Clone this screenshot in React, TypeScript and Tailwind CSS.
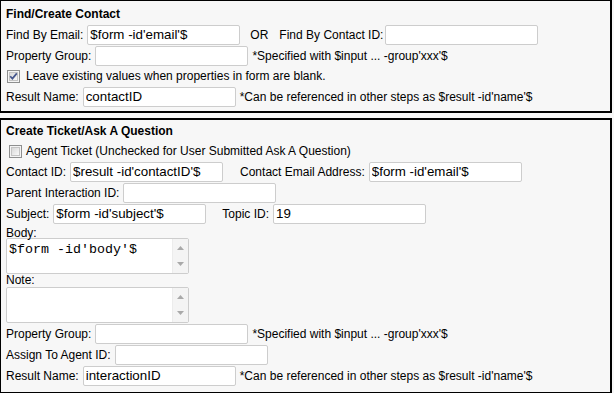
import React from 'react';

const font = { fontFamily: '"Liberation Sans", Arial, sans-serif' };

function Field({ value = '', className = '' }: { value?: string; className?: string }) {
  return (
    <input
      readOnly
      value={value}
      className={`h-[20px] w-[153px] shrink-0 rounded-[2px] border border-[#cdcdcd] bg-white px-[2px] text-[13.33px] text-black outline-none ${className}`}
    />
  );
}

function Check({ checked = false, className = '' }: { checked?: boolean; className?: string }) {
  const id = checked ? 'cb-on' : 'cb-off';
  return (
    <svg width="13" height="13" viewBox="0 0 13 13" className={`shrink-0 ${className}`}>
      <defs>
        <linearGradient id={id} x1="0" y1="0" x2="1" y2="1">
          <stop offset="0" stopColor="#d6d6d6" />
          <stop offset="1" stopColor="#fbfbfb" />
        </linearGradient>
      </defs>
      <rect x="0.5" y="0.5" width="12" height="12" fill="#f4f4f4" stroke="#8e8f8f" />
      <rect x="2.5" y="2.5" width="8" height="8" fill={`url(#${id})`} stroke="#c4c4c4" />
      {checked && (
        <path d="M3.2 6.2 L5.4 8.6 L9.8 3.4" fill="none" stroke="#45568c" strokeWidth="1.7" />
      )}
    </svg>
  );
}

function TextBox({ value = '', className = '' }: { value?: string; className?: string }) {
  return (
    <div className={`flex w-[183px] rounded-[2px] border border-[#cdcdcd] bg-white ${className}`}>
      <div
        className="flex-1 pl-[2px] pt-[3px] text-[13.33px] leading-[15px] text-black"
        style={{ fontFamily: '"Liberation Mono", "Courier New", monospace' }}
      >
        {value}
      </div>
      <div className="flex w-[16px] flex-col items-center justify-between border-l border-[#ececec] bg-[#f4f4f4] py-[7px]">
        <svg width="7" height="4" viewBox="0 0 7 4">
          <path d="M0 4 L3.5 0 L7 4 Z" fill="#a9a9a9" />
        </svg>
        <svg width="7" height="4" viewBox="0 0 7 4">
          <path d="M0 0 L7 0 L3.5 4 Z" fill="#a9a9a9" />
        </svg>
      </div>
    </div>
  );
}

const row = 'flex h-[21px] items-center whitespace-nowrap';

export default function App() {
  return (
    <div className="h-[393px] w-[614px] overflow-hidden bg-[#f7f7f7] text-[12px] text-black" style={font}>
      {/* Find/Create Contact */}
      <div className="-ml-px -mt-px w-[613px] border-2 border-black pb-[4px] pl-[5px] pt-[2px]">
        <div className={`${row} font-bold`}>Find/Create Contact</div>
        <div className={row}>
          <span>Find By Email:</span>
          <Field value="$form -id'email'$" className="ml-[4px]" />
          <span className="ml-[10px]">OR</span>
          <span className="ml-[11px]">Find By Contact ID:</span>
          <Field className="ml-[2px]" />
        </div>
        <div className={row}>
          <span>Property Group:</span>
          <Field className="ml-[4px]" />
          <span className="ml-[4px]">*Specified with $input ... -group'xxx'$</span>
        </div>
        <div className="flex h-[20px] items-center whitespace-nowrap">
          <Check checked className="ml-[1px]" />
          <span className="ml-[6px]">Leave existing values when properties in form are blank.</span>
        </div>
        <div className={row}>
          <span>Result Name:</span>
          <Field value="contactID" className="ml-[4px]" />
          <span className="ml-[4px]">*Can be referenced in other steps as $result -id'name'$</span>
        </div>
      </div>

      {/* Create Ticket/Ask A Question */}
      <div className="-ml-px mt-[5px] w-[613px] border-2 border-black pb-[6px] pl-[5px]">
        <div className={`${row} font-bold`}>Create Ticket/Ask A Question</div>
        <div className="flex h-[20px] items-center whitespace-nowrap">
          <Check className="ml-[3px]" />
          <span className="ml-[4px]">Agent Ticket (Unchecked for User Submitted Ask A Question)</span>
        </div>
        <div className={row}>
          <span>Contact ID:</span>
          <Field value="$result -id'contactID'$" className="ml-[4px]" />
          <span className="ml-[17px]">Contact Email Address:</span>
          <Field value="$form -id'email'$" className="ml-[4px]" />
        </div>
        <div className={row}>
          <span>Parent Interaction ID:</span>
          <Field className="ml-[4px]" />
        </div>
        <div className={row}>
          <span>Subject:</span>
          <Field value="$form -id'subject'$" className="ml-[4px]" />
          <span className="ml-[16px]">Topic ID:</span>
          <Field value="19" className="ml-[4px]" />
        </div>
        <div className="h-[14px] pt-[2px] leading-[14px]">Body:</div>
        <TextBox value="$form -id'body'$" className="h-[36px]" />
        <div className="h-[13px] leading-[13px]">Note:</div>
        <TextBox className="h-[36px]" />
        <div className={row}>
          <span>Property Group:</span>
          <Field className="ml-[4px]" />
          <span className="ml-[4px]">*Specified with $input ... -group'xxx'$</span>
        </div>
        <div className={row}>
          <span>Assign To Agent ID:</span>
          <Field className="ml-[4px]" />
        </div>
        <div className={row}>
          <span>Result Name:</span>
          <Field value="interactionID" className="ml-[4px]" />
          <span className="ml-[4px]">*Can be referenced in other steps as $result -id'name'$</span>
        </div>
      </div>
    </div>
  );
}
